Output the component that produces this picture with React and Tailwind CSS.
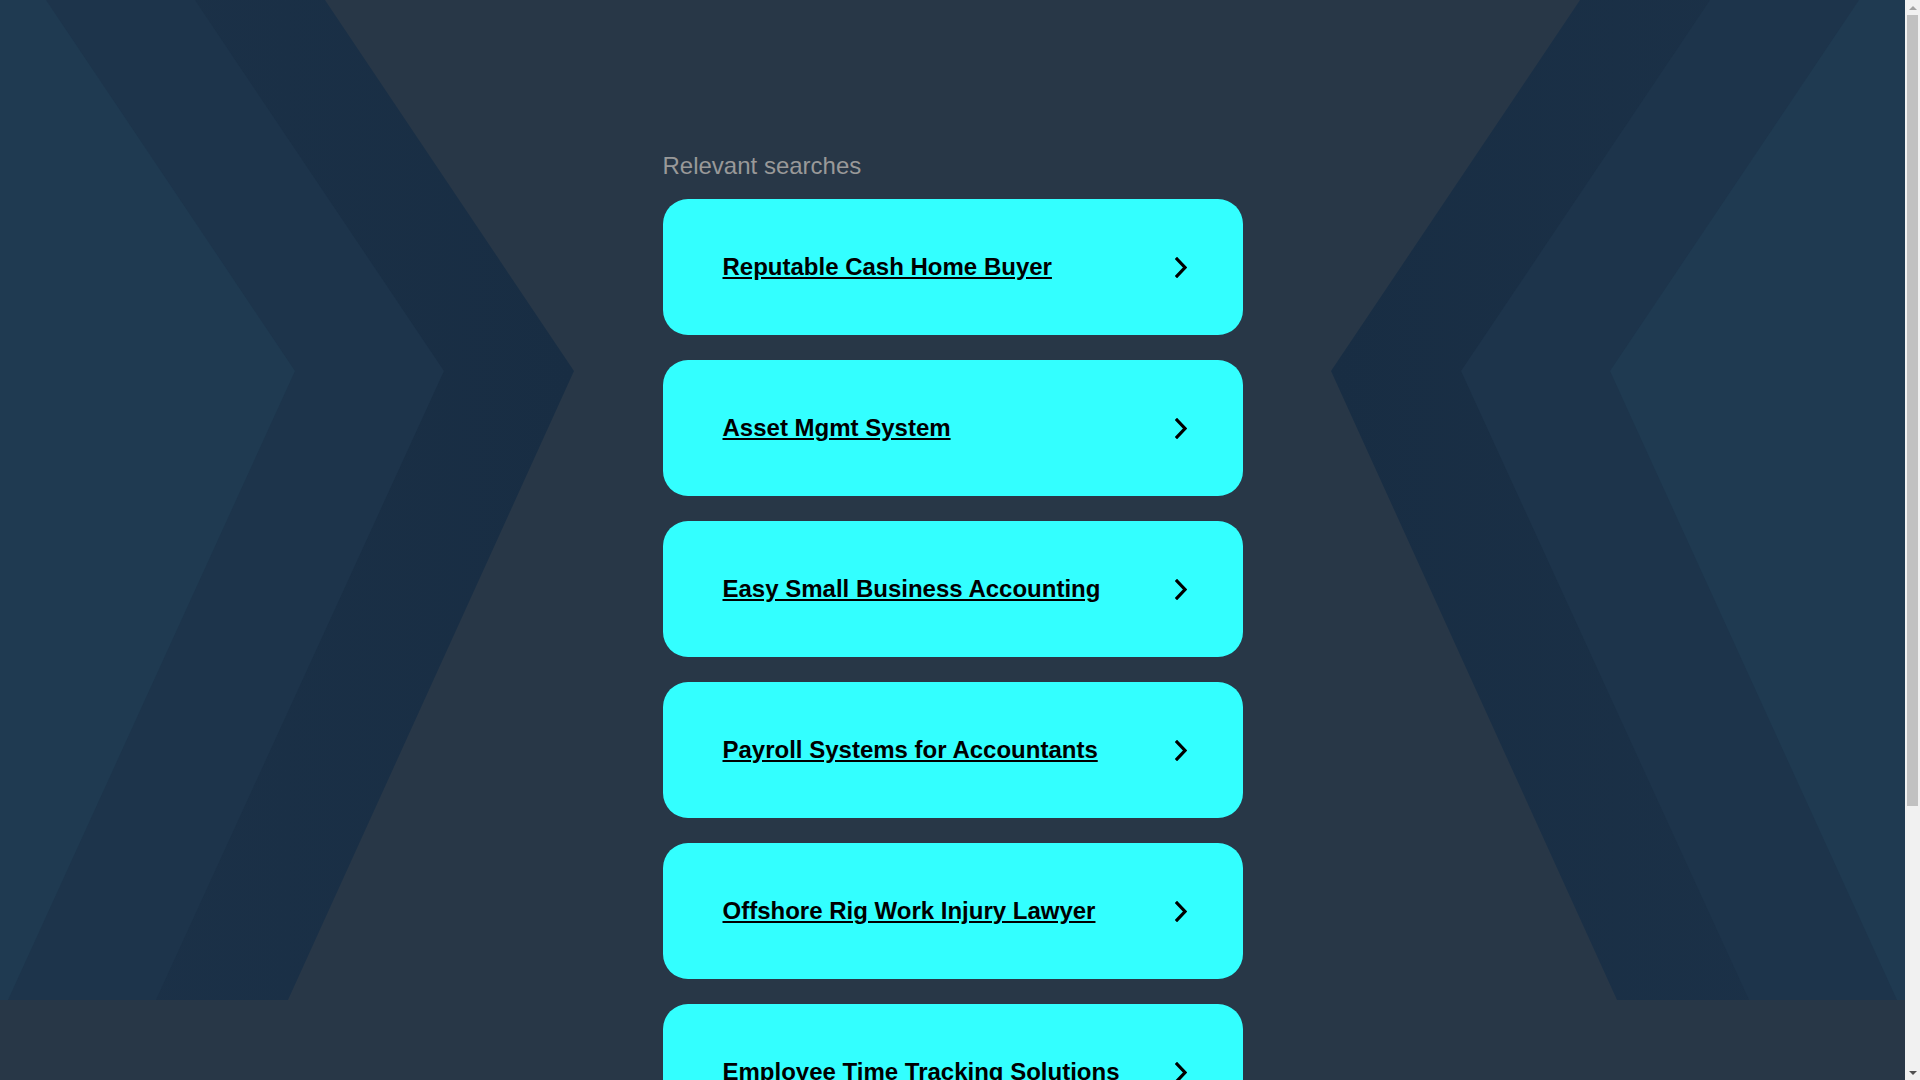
import React from 'react';

const searches = [
    'Reputable Cash Home Buyer',
    'Asset Mgmt System',
    'Easy Small Business Accounting',
    'Payroll Systems for Accountants',
    'Offshore Rig Work Injury Lawyer',
    'Employee Time Tracking Solutions',
];

// one side of the chevron backdrop, drawn for the left edge
const Chevrons = ({ className }) => (
    <svg className={className} width="600" height="1000" viewBox="0 0 600 1000" aria-hidden="true">
        <defs>
            <linearGradient id="band-outer" x1="0" y1="0" x2="1" y2="0">
                <stop offset="0" stopColor="#1c3249" />
                <stop offset="1" stopColor="#182d43" />
            </linearGradient>
        </defs>
        <polygon points="0,0 325,0 574,371 288,1000 0,1000" fill="url(#band-outer)" />
        <polygon points="0,0 195,0 444,371 156,1000 0,1000" fill="#1d344b" />
        <polygon points="0,0 46,0 295,371 8,1000 0,1000" fill="#1f3a51" />
    </svg>
);

const ChevronRight = () => (
    <svg width="12" height="21" viewBox="0 0 12 21" fill="none" stroke="#000" strokeWidth="3.2" strokeLinecap="square">
        <polyline points="2,2 10,10.5 2,19" />
    </svg>
);

// the classic window scrollbar seen at the right edge of the shot
const FakeScrollbar = () => (
    <div className="w-[15px] shrink-0 bg-[#f1f1f1]">
        <div className="flex h-[1080px] flex-col items-center">
            <div className="flex h-[15px] items-center justify-center">
                <div className="h-0 w-0 border-x-[4px] border-b-[4px] border-x-transparent border-b-[#a3a3a3]" />
            </div>
            <div className="h-[791px] w-[11px] bg-[#c1c1c1]" />
            <div className="flex-1" />
            <div className="flex h-[15px] items-center justify-center">
                <div className="h-0 w-0 border-x-[4px] border-t-[4px] border-x-transparent border-t-[#505050]" />
            </div>
        </div>
    </div>
);

const App = () => {
    return (
        <div className="flex bg-[#283747]" style={{ fontFamily: '"Liberation Sans", Arial, sans-serif' }}>
            <main className="relative min-h-[1434px] flex-1">
                <div className="absolute inset-x-0 top-0 h-[1000px] overflow-hidden">
                    <Chevrons className="absolute left-0 top-0" />
                    <Chevrons className="absolute right-0 top-0 -scale-x-100" />
                </div>

                <div className="relative mx-auto w-[580px] pt-[152px] pb-[294px]">
                    <h2 className="mb-[19px] text-[24px] leading-[28px] text-[#999999]">Relevant searches</h2>
                    <div className="flex flex-col gap-[25px]">
                        {searches.map((s) => (
                            <a
                                key={s}
                                href="#"
                                className="flex h-[136px] items-center justify-between rounded-[25px] bg-[#33ffff] pl-[60px] pr-[56px]"
                            >
                                <span className="text-[24px] font-bold text-black underline">{s}</span>
                                <ChevronRight />
                            </a>
                        ))}
                    </div>
                </div>
            </main>
            <FakeScrollbar />
        </div>
    );
};

export default App;
